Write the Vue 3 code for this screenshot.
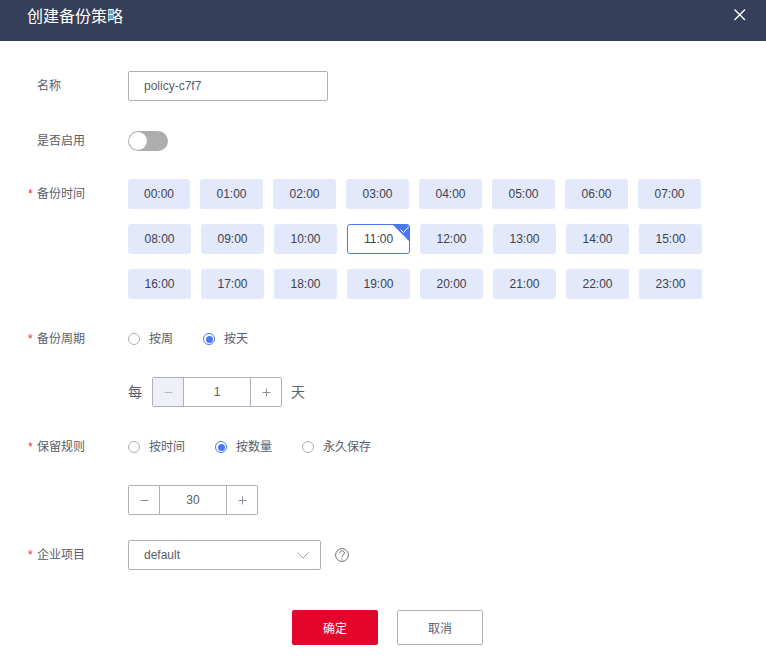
<script setup>
import { ref } from 'vue';

const pad = (n) => `${n < 10 ? '0' : ''}${n}:00`;
const rows = [0, 8, 16].map((start) => Array.from({ length: 8 }, (_, i) => start + i));
const selectedHour = ref(11);
const period = ref('day');
const retention = ref('count');
const everyDays = ref(1);
const keepCount = ref(30);
const enabled = ref(false);
const policyName = ref('policy-c7f7');
</script>

<template>
	<div class="dialog">
		<header class="head">
			<span class="title">创建备份策略</span>
			<svg class="close" width="12" height="12" viewBox="0 0 12 12">
				<path d="M0.5 0.5 L11 11 M11 0.5 L0.5 11" stroke="#fff" stroke-width="1.4" fill="none" />
			</svg>
		</header>

		<main class="form">
			<div class="row row-name">
				<label class="label"><i class="star"></i>名称</label>
				<input class="input" v-model="policyName" />
			</div>

			<div class="row row-switch">
				<label class="label"><i class="star"></i>是否启用</label>
				<div class="switch" :class="{ on: enabled }" @click="enabled = !enabled">
					<span class="knob"></span>
				</div>
			</div>

			<div class="row row-time">
				<label class="label label-top"><i class="star">*</i>备份时间</label>
				<div class="hours">
					<div class="hour-row" v-for="(hours, r) in rows" :key="r">
						<div
							v-for="h in hours"
							:key="h"
							class="hour"
							:class="{ active: h === selectedHour }"
							@click="selectedHour = h"
						>
							{{ pad(h) }}
							<svg v-if="h === selectedHour" class="corner" width="18" height="18" viewBox="0 0 18 18">
								<path d="M0 0 H16 Q18 0 18 2 V18 Z" fill="#4a78ee" />
								<path d="M8.5 5.5 L11.5 8.5 L16.5 3" stroke="#fff" stroke-width="1" fill="none" />
							</svg>
						</div>
					</div>
				</div>
			</div>

			<div class="row row-period">
				<label class="label"><i class="star">*</i>备份周期</label>
				<div class="radios">
					<label class="radio" :class="{ checked: period === 'week' }" @click="period = 'week'"><span class="dot"></span>按周</label>
					<label class="radio" :class="{ checked: period === 'day' }" @click="period = 'day'"><span class="dot"></span>按天</label>
				</div>
			</div>

			<div class="row row-every">
				<span class="label"></span>
				<span class="unit unit-left">每</span>
				<div class="stepper">
					<button class="step disabled">
						<svg width="9" height="9" viewBox="0 0 9 9"><path d="M0.5 4.5 H8.5" /></svg>
					</button>
					<span class="value">{{ everyDays }}</span>
					<button class="step" @click="everyDays++">
						<svg width="9" height="9" viewBox="0 0 9 9"><path d="M0.5 4.5 H8.5 M4.5 0.5 V8.5" /></svg>
					</button>
				</div>
				<span class="unit unit-right">天</span>
			</div>

			<div class="row row-keep">
				<label class="label"><i class="star">*</i>保留规则</label>
				<div class="radios">
					<label class="radio" :class="{ checked: retention === 'time' }" @click="retention = 'time'"><span class="dot"></span>按时间</label>
					<label class="radio" :class="{ checked: retention === 'count' }" @click="retention = 'count'"><span class="dot"></span>按数量</label>
					<label class="radio" :class="{ checked: retention === 'forever' }" @click="retention = 'forever'"><span class="dot"></span>永久保存</label>
				</div>
			</div>

			<div class="row row-count">
				<span class="label"></span>
				<div class="stepper">
					<button class="step" @click="keepCount--">
						<svg width="9" height="9" viewBox="0 0 9 9"><path d="M0.5 4.5 H8.5" /></svg>
					</button>
					<span class="value">{{ keepCount }}</span>
					<button class="step" @click="keepCount++">
						<svg width="9" height="9" viewBox="0 0 9 9"><path d="M0.5 4.5 H8.5 M4.5 0.5 V8.5" /></svg>
					</button>
				</div>
			</div>

			<div class="row row-project">
				<label class="label"><i class="star">*</i>企业项目</label>
				<div class="select">
					<span>default</span>
					<svg width="12" height="7" viewBox="0 0 12 7">
						<path d="M0.5 0.5 L6 6 L11.5 0.5" stroke="#a3a7b3" stroke-width="1" fill="none" />
					</svg>
				</div>
				<svg class="help" width="14" height="14" viewBox="0 0 14 14">
					<circle cx="7" cy="7" r="6.4" stroke="#6b6f78" stroke-width="1" fill="none" />
					<path d="M4.6 5.2 C4.6 2.1 9.4 2.1 9.4 5 C9.4 6.9 7 6.7 7 9" stroke="#6b6f78" stroke-width="1" fill="none" />
					<circle cx="7" cy="10.9" r="0.7" fill="#6b6f78" />
				</svg>
			</div>

			<div class="actions">
				<button class="btn primary">确定</button>
				<button class="btn">取消</button>
			</div>
		</main>
	</div>
</template>

<style>
html,
body {
	margin: 0;
	background: #fff;
}
</style>

<style scoped>
* {
	box-sizing: border-box;
}
.dialog {
	width: 766px;
	height: 670px;
	overflow: hidden;
	font-family: "Liberation Sans", "Noto Sans CJK SC", sans-serif;
	font-size: 12px;
	color: #575d6c;
}
.head {
	height: 41px;
	background: #363f5a;
	padding: 5px 20px 0 27px;
	display: flex;
	justify-content: space-between;
	color: #fff;
}
.title {
	font-size: 16px;
	line-height: 24px;
}
.close {
	margin-top: 4px;
}
.form {
	padding: 30px 0 0 28px;
}
.row {
	display: flex;
	align-items: center;
}
.label {
	width: 100px;
	flex: none;
	line-height: 20px;
	color: #575d6c;
}
.label-top {
	align-self: flex-start;
	padding-top: 5px;
}
.star {
	display: inline-block;
	width: 9px;
	color: #e6303f;
	font-style: normal;
}
.input {
	width: 200px;
	height: 30px;
	border: 1px solid #adb0b8;
	border-radius: 2px;
	padding: 0 15px;
	font: inherit;
	color: #575d6c;
	outline: none;
}
.row-switch {
	margin-top: 30px;
}
.switch {
	width: 40px;
	height: 20px;
	border-radius: 10px;
	background: #adadad;
	padding: 1px;
}
.knob {
	display: block;
	width: 18px;
	height: 18px;
	border-radius: 50%;
	background: #fff;
}
.switch.on {
	background: #4a78ee;
	padding-left: 21px;
}
.row-time {
	margin-top: 28px;
}
.hours {
	display: flex;
	flex-direction: column;
	gap: 15px;
}
.hour-row {
	display: flex;
	gap: 10px;
}
.hour {
	position: relative;
	width: 63px;
	height: 30px;
	border-radius: 3px;
	background: #e3e9fa;
	color: #3c4252;
	line-height: 30px;
	text-align: center;
	overflow: hidden;
}
.hour-row:first-child .hour:first-child {
	width: 62px;
}
.hour.active {
	background: #fff;
	border: 1px solid #4a78ee;
	line-height: 28px;
}
.corner {
	position: absolute;
	top: -1px;
	right: -1px;
}
.row-period {
	margin-top: 30px;
	height: 20px;
}
.radios {
	display: flex;
	gap: 30px;
}
.radio {
	display: flex;
	align-items: center;
	gap: 9px;
	line-height: 20px;
	color: #575d6c;
}
.dot {
	position: relative;
	width: 12px;
	height: 12px;
	border: 1px solid #adb0b8;
	border-radius: 50%;
	background: #fff;
}
.checked .dot {
	border-color: #4a78ee;
}
.checked .dot::after {
	content: '';
	position: absolute;
	inset: 1.5px;
	border-radius: 50%;
	background: #4a78ee;
}
.row-every {
	margin-top: 28px;
}
.unit {
	font-size: 14px;
	line-height: 20px;
	color: #575d6c;
}
.unit-left {
	margin-right: 10px;
}
.unit-right {
	margin-left: 9px;
}
.stepper {
	display: flex;
	width: 130px;
	height: 30px;
	border: 1px solid #adb0b8;
	border-radius: 2px;
	overflow: hidden;
}
.step {
	width: 30px;
	flex: none;
	border: 0;
	padding: 0;
	background: #fff;
	display: flex;
	align-items: center;
	justify-content: center;
}
.step svg {
	stroke: #8a8e99;
	stroke-width: 1;
	fill: none;
}
.step.disabled {
	background: #eff0f5;
}
.step.disabled svg {
	stroke: #b6b9c2;
}
.value {
	flex: 1;
	border-left: 1px solid #adb0b8;
	border-right: 1px solid #adb0b8;
	line-height: 28px;
	text-align: center;
	color: #575d6c;
}
.row-keep {
	margin-top: 30px;
	height: 20px;
}
.row-count {
	margin-top: 28px;
}
.row-project {
	margin-top: 25px;
}
.select {
	width: 193px;
	height: 30px;
	border: 1px solid #adb0b8;
	border-radius: 2px;
	padding: 0 11px 0 15px;
	display: flex;
	align-items: center;
	justify-content: space-between;
}
.help {
	margin-left: 14px;
}
.actions {
	margin-top: 40px;
	margin-left: 264px;
	display: flex;
	gap: 19px;
}
.btn {
	width: 86px;
	height: 35px;
	border: 1px solid #adb0b8;
	border-radius: 2px;
	background: #fff;
	color: #575d6c;
	font: inherit;
	padding: 0;
}
.btn.primary {
	background: #e4052c;
	border-color: #e4052c;
	color: #fff;
}
</style>
